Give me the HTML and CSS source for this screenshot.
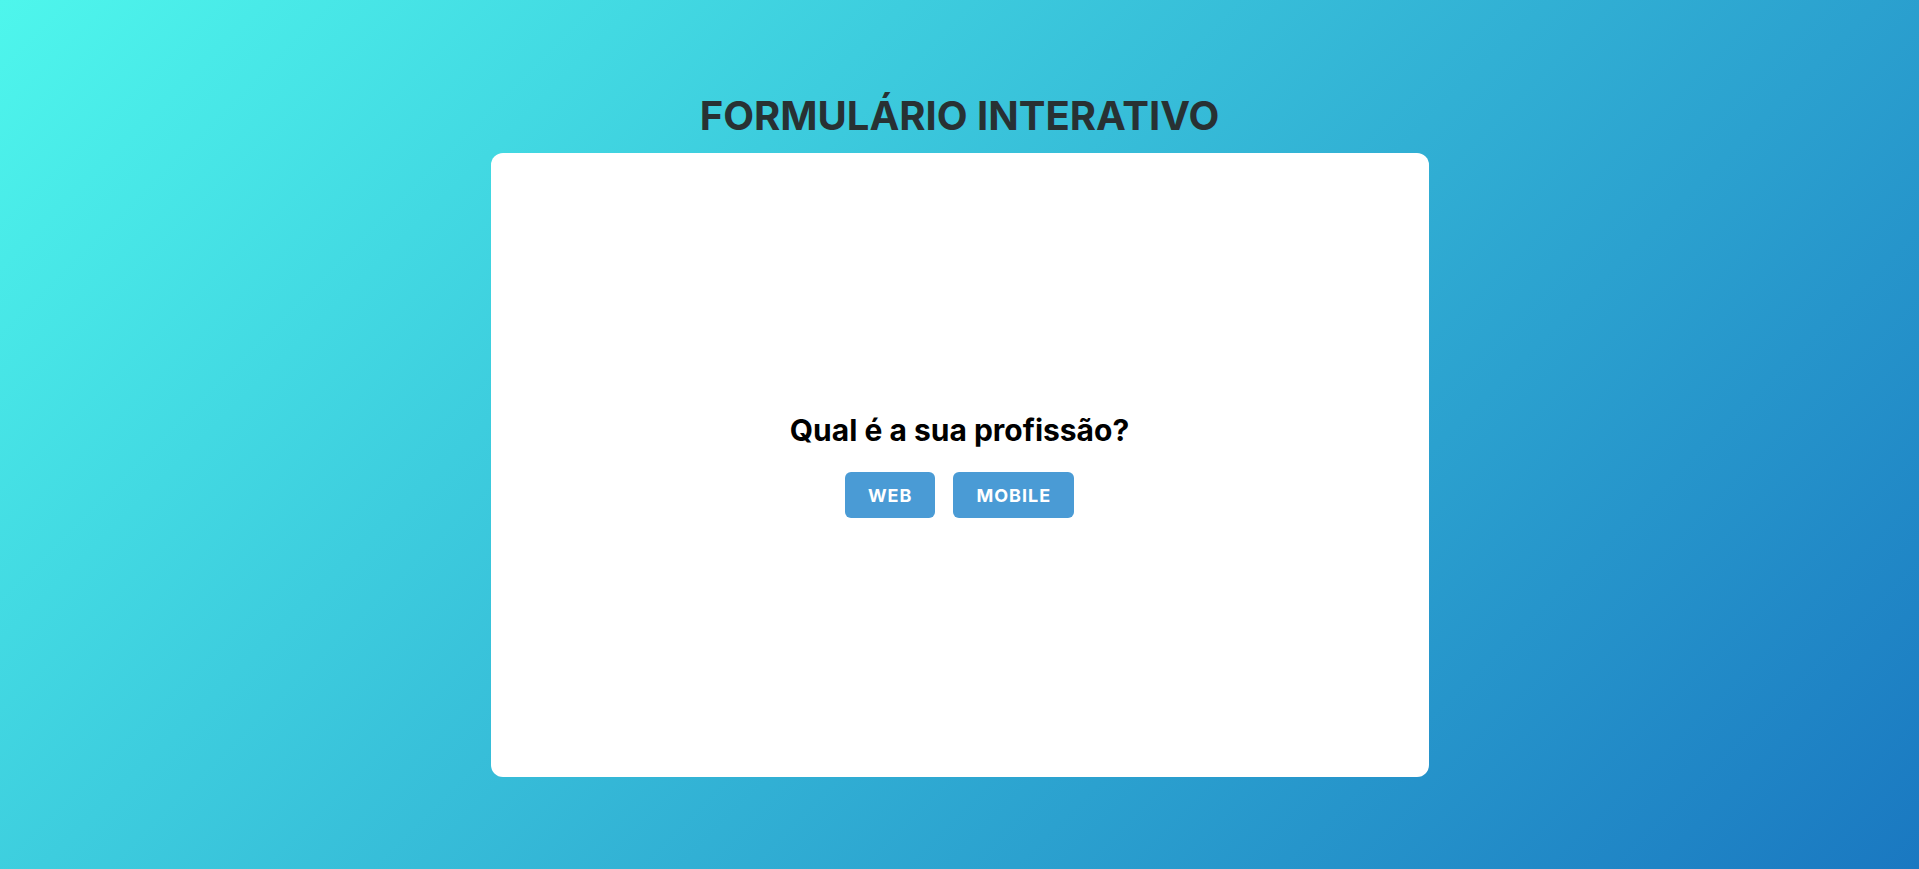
FILE: index.html
```html
<!DOCTYPE html>
<html lang="pt-BR">
<head>
<meta charset="utf-8">
<title>Formulário Interativo</title>
<link rel="stylesheet" href="styles.css">
</head>
<body>
<main class="page">
  <h1 class="title">FORMULÁRIO INTERATIVO</h1>
  <section class="card">
    <h2 class="question">Qual é a sua profissão?</h2>
    <div class="options">
      <button class="option">WEB</button>
      <button class="option">MOBILE</button>
    </div>
  </section>
</main>
</body>
</html>
```

FILE: styles.css
```css
* { box-sizing: border-box; }
html, body { margin: 0; padding: 0; }
body {
  min-height: 100vh;
  font-family: Inter, "Noto Sans", sans-serif;
  background: linear-gradient(135deg, #4ef6ec, #1a78c1);
}
.page {
  min-height: 100vh;
  display: flex;
  flex-direction: column;
  align-items: center;
  justify-content: center;
}
.title {
  margin: 0 0 13px;
  font-size: 40px;
  font-weight: 700;
  color: #283133;
  line-height: 1.21;
}
.card {
  width: 938px;
  height: 624px;
  background: #fff;
  border-radius: 12px;
  display: flex;
  flex-direction: column;
  align-items: center;
  justify-content: center;
}
.question {
  margin: 0 0 24px;
  font-size: 30px;
  font-weight: 700;
  color: #000;
  line-height: 1.21;
}
.options {
  display: flex;
  gap: 18px;
}
.option {
  height: 46px;
  padding: 0 23px;
  border: none;
  border-radius: 6px;
  background: #4a9bd5;
  color: #fff;
  font-family: inherit;
  font-size: 18px;
  font-weight: 700;
  letter-spacing: 1px;
  cursor: pointer;
}
```
